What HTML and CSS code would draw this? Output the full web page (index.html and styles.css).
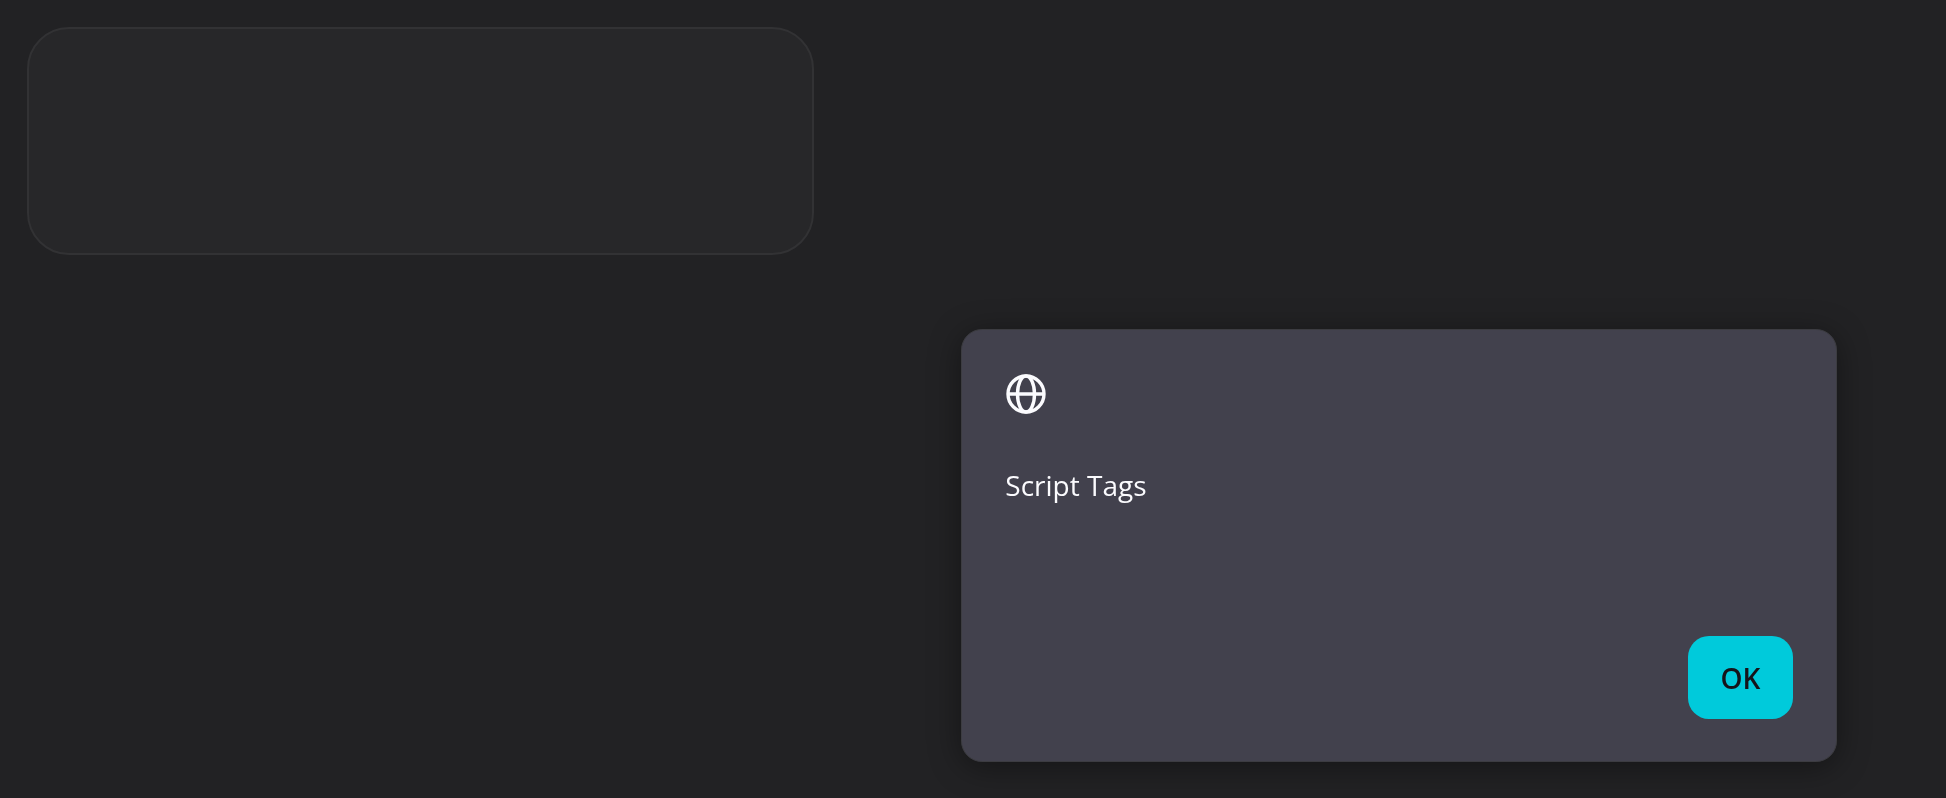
FILE: index.html
```html
<!DOCTYPE html>
<html lang="en">
<head>
    <meta charset="UTF-8">
    <meta name="viewport" content="width=device-width, initial-scale=1.0">
    <title>Script Tags</title>
    <link rel="stylesheet" href="styles.css">
</head>
<body>
    <main>
        <section class="card"></section>
    </main>

    <dialog class="alert" aria-labelledby="alert-message" open>
        <svg class="globe" viewBox="0 0 42 42" aria-hidden="true">
            <circle cx="21" cy="21" r="18"/>
            <ellipse cx="21" cy="21" rx="8.5" ry="18"/>
            <path d="M3 21h36"/>
        </svg>
        <p class="message" id="alert-message">Script Tags</p>
        <form class="actions" method="dialog">
            <button class="ok-btn">OK</button>
        </form>
    </dialog>
</body>
</html>
```
FILE: styles.css
```css
/* General Reset */
* {
    margin: 0;
    padding: 0;
    box-sizing: border-box;
}

body {
    font-family: "Segoe UI", "Open Sans", "Noto Sans", sans-serif;
    font-size: 28px;
    line-height: 40px;
    min-height: 100vh;
    padding: 27px;
    background-color: #222224;
}

/* Empty Card */
.card {
    width: 41.6%;
    min-height: 228px;
    background-color: #272729;
    border: 2px solid #323234;
    border-radius: 42px;
}

/* Alert Dialog */
.alert {
    position: fixed;
    inset: auto 109px 36px auto;
    width: 45%;
    min-height: 433px;
    padding: 43px 43px 42px;
    display: flex;
    flex-direction: column;
    color: #fbfbfe;
    background-color: #42414d;
    border: 1px solid #3c3c41;
    border-radius: 21px;
    box-shadow: 0 5px 32px rgba(0, 0, 0, 0.4);
}

.globe {
    width: 42px;
    height: 42px;
    fill: none;
    stroke: currentColor;
    stroke-width: 3.4;
}

.message {
    margin-top: 50px;
}

.actions {
    display: flex;
    justify-content: flex-end;
    margin-top: auto;
}

.ok-btn {
    min-width: 105px;
    padding: 22px 32px 21px;
    font: inherit;
    font-weight: 600;
    color: #15141a;
    background-color: #00cadb;
    border: none;
    border-radius: 21px;
    cursor: pointer;
}

.ok-btn:hover {
    background-color: #80ebff;
}
```
